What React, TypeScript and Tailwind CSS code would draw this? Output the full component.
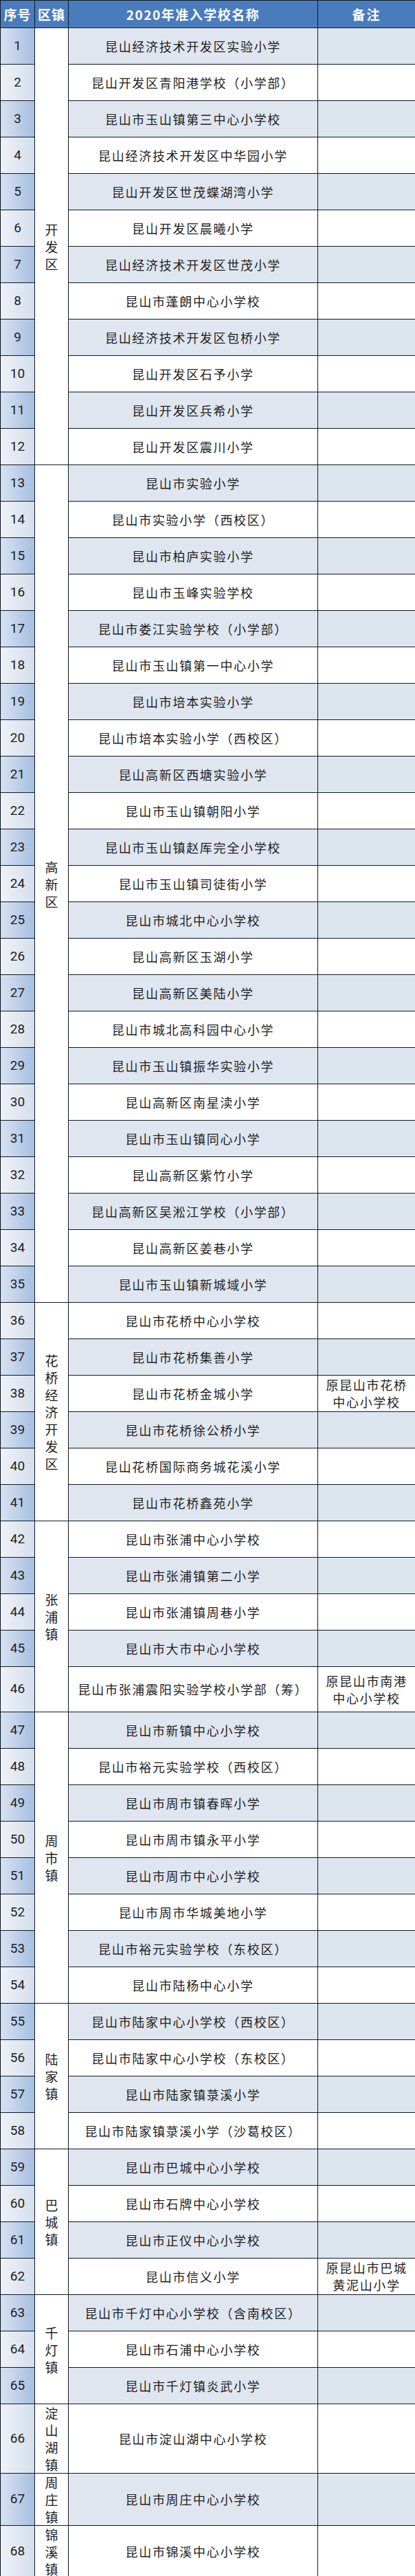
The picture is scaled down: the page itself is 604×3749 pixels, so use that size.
type Group = { name: string; schools: string[] };

const groups: Group[] = [
  {
    name: '开发区',
    schools: [
      '昆山经济技术开发区实验小学',
      '昆山开发区青阳港学校（小学部）',
      '昆山市玉山镇第三中心小学校',
      '昆山经济技术开发区中华园小学',
      '昆山开发区世茂蝶湖湾小学',
      '昆山开发区晨曦小学',
      '昆山经济技术开发区世茂小学',
      '昆山市蓬朗中心小学校',
      '昆山经济技术开发区包桥小学',
      '昆山开发区石予小学',
      '昆山开发区兵希小学',
      '昆山开发区震川小学',
    ],
  },
  {
    name: '高新区',
    schools: [
      '昆山市实验小学',
      '昆山市实验小学（西校区）',
      '昆山市柏庐实验小学',
      '昆山市玉峰实验学校',
      '昆山市娄江实验学校（小学部）',
      '昆山市玉山镇第一中心小学',
      '昆山市培本实验小学',
      '昆山市培本实验小学（西校区）',
      '昆山高新区西塘实验小学',
      '昆山市玉山镇朝阳小学',
      '昆山市玉山镇赵厍完全小学校',
      '昆山市玉山镇司徒街小学',
      '昆山市城北中心小学校',
      '昆山高新区玉湖小学',
      '昆山高新区美陆小学',
      '昆山市城北高科园中心小学',
      '昆山市玉山镇振华实验小学',
      '昆山高新区南星渎小学',
      '昆山市玉山镇同心小学',
      '昆山高新区紫竹小学',
      '昆山高新区吴淞江学校（小学部）',
      '昆山高新区姜巷小学',
      '昆山市玉山镇新城域小学',
    ],
  },
  {
    name: '花桥经济开发区',
    schools: [
      '昆山市花桥中心小学校',
      '昆山市花桥集善小学',
      '昆山市花桥金城小学',
      '昆山市花桥徐公桥小学',
      '昆山花桥国际商务城花溪小学',
      '昆山市花桥鑫苑小学',
    ],
  },
  {
    name: '张浦镇',
    schools: [
      '昆山市张浦中心小学校',
      '昆山市张浦镇第二小学',
      '昆山市张浦镇周巷小学',
      '昆山市大市中心小学校',
      '昆山市张浦震阳实验学校小学部（筹）',
    ],
  },
  {
    name: '周市镇',
    schools: [
      '昆山市新镇中心小学校',
      '昆山市裕元实验学校（西校区）',
      '昆山市周市镇春晖小学',
      '昆山市周市镇永平小学',
      '昆山市周市中心小学校',
      '昆山市周市华城美地小学',
      '昆山市裕元实验学校（东校区）',
      '昆山市陆杨中心小学',
    ],
  },
  {
    name: '陆家镇',
    schools: [
      '昆山市陆家中心小学校（西校区）',
      '昆山市陆家中心小学校（东校区）',
      '昆山市陆家镇菉溪小学',
      '昆山市陆家镇菉溪小学（沙葛校区）',
    ],
  },
  {
    name: '巴城镇',
    schools: [
      '昆山市巴城中心小学校',
      '昆山市石牌中心小学校',
      '昆山市正仪中心小学校',
      '昆山市信义小学',
    ],
  },
  {
    name: '千灯镇',
    schools: [
      '昆山市千灯中心小学校（含南校区）',
      '昆山市石浦中心小学校',
      '昆山市千灯镇炎武小学',
    ],
  },
  { name: '淀山湖镇', schools: ['昆山市淀山湖中心小学校'] },
  { name: '周庄镇', schools: ['昆山市周庄中心小学校'] },
  { name: '锦溪镇', schools: ['昆山市锦溪中心小学校'] },
];

const notes: Record<number, string[]> = {
  38: ['原昆山市花桥', '中心小学校'],
  46: ['原昆山市南港', '中心小学校'],
  62: ['原昆山市巴城', '黄泥山小学'],
};

function rowHeight(n: number) {
  if (n === 46) return 'h-[66px]';
  if (n === 66) return 'h-[100px]';
  if (n === 67 || n === 68) return 'h-[75px]';
  return 'h-[53px]';
}

const cell = 'border border-[#111a24] p-0 text-center align-middle';

export default function App() {
  let n = 0;
  return (
    <div className="w-[604px] bg-white font-['Noto_Sans_CJK_SC',sans-serif] text-[#1e1e1e]">
      <table className="w-[604px] table-fixed border-collapse">
        <colgroup>
          <col className="w-[50px]" />
          <col className="w-[49px]" />
          <col className="w-[363px]" />
          <col className="w-[142px]" />
        </colgroup>
        <thead>
          <tr className="h-[40px] bg-[#4a7cbd] text-[19px] font-bold leading-none text-white">
            <th className={`${cell} tracking-[1px]`}>序号</th>
            <th className={`${cell} tracking-[1px]`}>区镇</th>
            <th className={`${cell} tracking-[1.5px]`}>2020年准入学校名称</th>
            <th className={`${cell} tracking-[2px]`}>备注</th>
          </tr>
        </thead>
        <tbody>
          {groups.map((g) =>
            g.schools.map((school, i) => {
              n += 1;
              const odd = n % 2 === 1;
              const note = notes[n];
              return (
                <tr key={n} className={rowHeight(n)}>
                  <td
                    className={`${cell} bg-linear-to-r font-['Roboto',sans-serif] text-[19px] ${
                      odd ? 'from-[#d7e2f1] to-[#a5bee1]' : 'from-[#eff2f7] to-[#d4deec]'
                    }`}
                  >
                    {n}
                  </td>
                  {i === 0 && (
                    <td rowSpan={g.schools.length} className={`${cell} bg-white text-[19px] leading-[25px]`}>
                      <div className="flex flex-col items-center">
                        {g.name.split('').map((ch, k) => (
                          <span key={k}>{ch}</span>
                        ))}
                      </div>
                    </td>
                  )}
                  <td
                    className={`${cell} whitespace-nowrap text-[18px] tracking-[1.7px] ${
                      odd ? 'bg-[#dfe6f0]' : 'bg-white'
                    }`}
                  >
                    {school}
                  </td>
                  <td
                    className={`${cell} text-[18px] leading-[25px] tracking-[1.7px] ${
                      odd ? 'bg-[#dde5ef]' : 'bg-white'
                    }`}
                  >
                    {note &&
                      note.map((line) => (
                        <div key={line} className="whitespace-nowrap">
                          {line}
                        </div>
                      ))}
                  </td>
                </tr>
              );
            })
          )}
        </tbody>
      </table>
    </div>
  );
}
